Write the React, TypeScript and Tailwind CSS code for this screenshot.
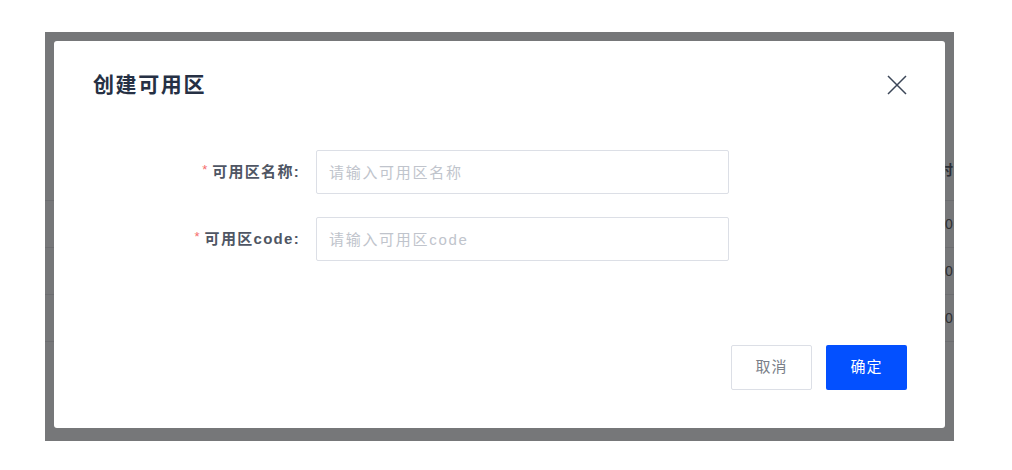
import React from "react";

const font = { fontFamily: '"Liberation Sans", "Noto Sans CJK SC", sans-serif' };

interface FieldProps {
  label: string;
  placeholder: string;
}

const Field: React.FC<FieldProps> = ({ label, placeholder }) => {
  return (
    <div className="flex items-center">
      {/* 标签 */}
      <div className="w-[246px] flex justify-end items-center">
        <span className="text-[#f56c6c] text-[13px] mr-[5px] -mt-[4px]">*</span>
        <span className="text-[15px] font-bold text-[#4f5664] tracking-[1.3px]">{label}</span>
      </div>
      {/* 输入框 */}
      <input
        className="ml-[16px] w-[413px] h-[44px] border border-[#dcdfe6] rounded-[2px] px-[12px] text-[15px] tracking-[1.7px] outline-none placeholder:text-[#c0c4cc]"
        placeholder={placeholder}
        style={font}
      />
    </div>
  );
};

const rows = ["0", "0", "0"];

export default function App() {
  return (
    <div className="w-[1012px] h-[470px] bg-white pt-[32px]" style={font}>
      <div className="relative ml-[45px] w-[909px] h-[409px] bg-[#767779] overflow-hidden">
        {/* 背景表格 */}
        <div className="pt-[121px]">
          <div className="h-[48px] border-b border-[#6c6d70] flex items-center">
            <span className="ml-[894px] -mt-[12px] text-[14px] font-bold text-[#2b2f36] whitespace-nowrap">时</span>
          </div>
          {rows.map((r, i) => (
            <div key={i} className="h-[47px] border-b border-[#6c6d70] flex items-center">
              <span className="ml-[900px] text-[14px] text-[#2f3033] whitespace-nowrap">{r}</span>
            </div>
          ))}
        </div>

        {/* 弹窗 */}
        <div className="absolute left-[9px] top-[9px] w-[891px] h-[387px] bg-white rounded-[3px] flex flex-col">
          <div className="h-[88px] flex items-center justify-between px-[39px]">
            <h2 className="text-[21px] font-bold text-[#263044] tracking-[1.6px]">创建可用区</h2>
            <svg width="20" height="20" viewBox="0 0 20 20" className="-mr-[1px]">
              <path d="M1 1L19 19M19 1L1 19" stroke="#3c4658" strokeWidth="1.5" fill="none" />
            </svg>
          </div>

          <div className="mt-[21px] flex flex-col gap-[23px]">
            <Field label="可用区名称:" placeholder="请输入可用区名称" />
            <Field label="可用区code:" placeholder="请输入可用区code" />
          </div>

          <div className="mt-auto mb-[38px] flex justify-end gap-[14px] pr-[38px]">
            <button className="w-[81px] h-[45px] border border-[#dcdfe6] rounded-[2px] text-[15px] text-[#7a7f89] tracking-[1px]">
              取消
            </button>
            <button className="w-[81px] h-[45px] bg-[#0350ff] rounded-[2px] text-[15px] text-white tracking-[1px]">
              确定
            </button>
          </div>
        </div>
      </div>
    </div>
  );
}
